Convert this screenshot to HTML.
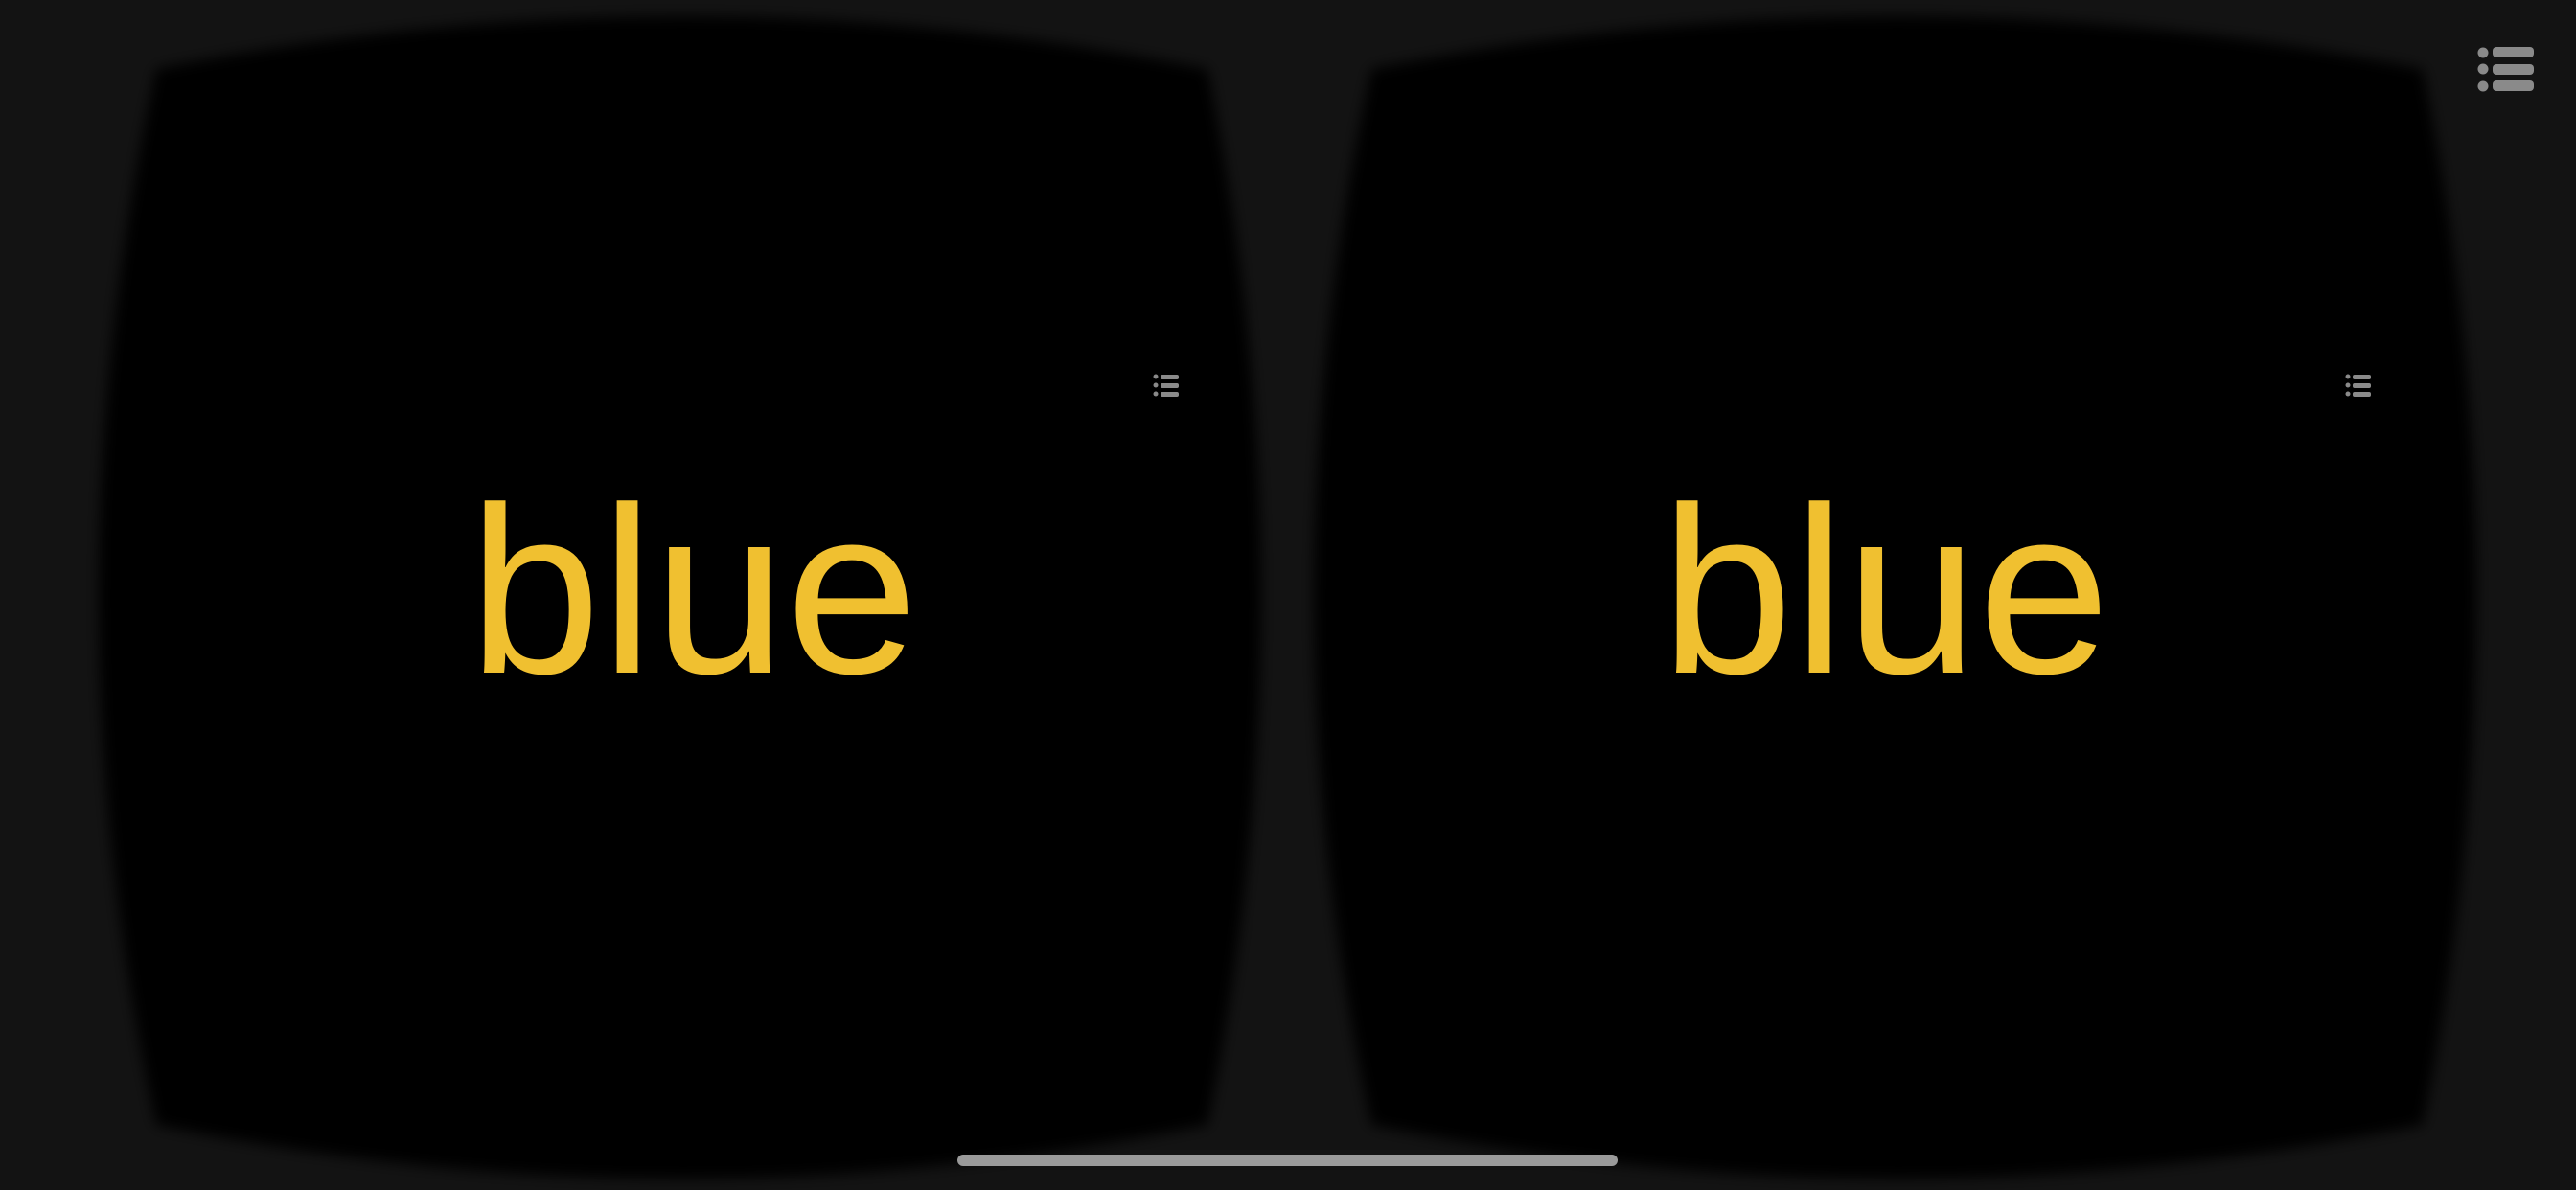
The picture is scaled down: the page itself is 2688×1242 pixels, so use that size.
<!DOCTYPE html>
<html><head><meta charset="utf-8"><style>
html,body{margin:0;padding:0;background:#131313;width:2688px;height:1242px;overflow:hidden;position:relative}
.t{position:absolute;font-family:"Liberation Sans",Arial,sans-serif;font-size:248px;color:#F0C030;line-height:1;white-space:nowrap}
</style></head><body>
<svg width="2688" height="1242" style="position:absolute;left:0;top:0">
<defs><filter id="b" x="-10%" y="-10%" width="120%" height="120%"><feGaussianBlur stdDeviation="7"/></filter></defs>
<path filter="url(#b)" fill="#000" d="M163,72 Q711,-38 1260,72 Q1372,623 1260,1174 Q711,1286 163,1174 Q43,623 163,72Z"/>
<path filter="url(#b)" fill="#000" d="M1431,72 Q1979,-38 2528,72 Q2640,623 2528,1174 Q1979,1286 1431,1174 Q1311,623 1431,72Z"/>
<g fill="#8a8a8a">
<circle cx="1206" cy="393" r="2.5"/><rect x="1211" y="391" width="19" height="5" rx="2"/>
<circle cx="1206" cy="402" r="2.5"/><rect x="1211" y="400" width="19" height="5" rx="2"/>
<circle cx="1206" cy="411" r="2.5"/><rect x="1211" y="409" width="19" height="5" rx="2"/>
<circle cx="2450" cy="393" r="2.5"/><rect x="2455" y="391" width="19" height="5" rx="2"/>
<circle cx="2450" cy="402" r="2.5"/><rect x="2455" y="400" width="19" height="5" rx="2"/>
<circle cx="2450" cy="411" r="2.5"/><rect x="2455" y="409" width="19" height="5" rx="2"/>
<circle cx="2591" cy="55" r="5.5"/><rect x="2601" y="49" width="43" height="11" rx="4"/>
<circle cx="2591" cy="72" r="5.5"/><rect x="2601" y="67" width="43" height="11" rx="4"/>
<circle cx="2591" cy="90" r="5.5"/><rect x="2601" y="84" width="43" height="11" rx="4"/>
</g>
<rect x="999" y="1205" width="689" height="12" rx="6" fill="#9a9a9a"/>
</svg>
<div class="t" style="left:489px;top:492px">blue</div>
<div class="t" style="left:1733px;top:492px">blue</div>
</body></html>
